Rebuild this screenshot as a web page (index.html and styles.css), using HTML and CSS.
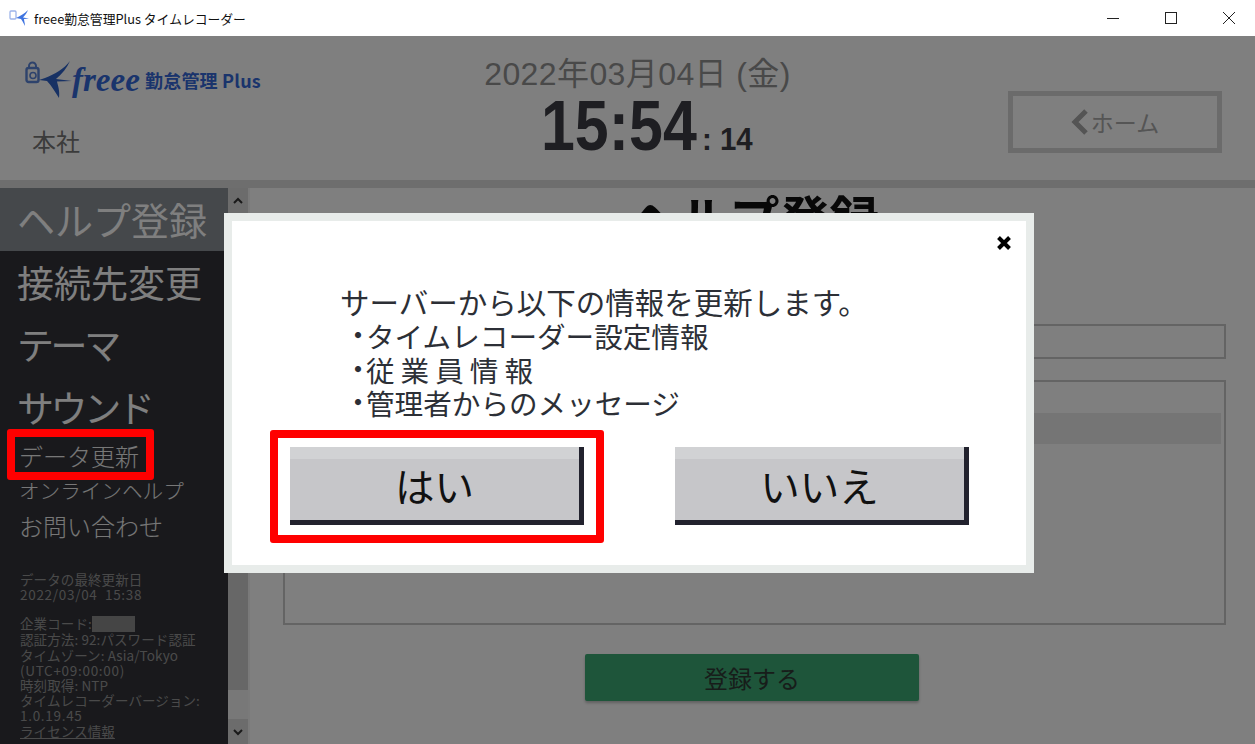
FILE: index.html
```html
<!DOCTYPE html>
<html lang="ja">
<head>
<meta charset="utf-8">
<title>freee勤怠管理Plus タイムレコーダー</title>
<link rel="stylesheet" href="styles.css">
</head>
<body>
<div class="window">
  <div class="titlebar">
    <svg class="title-icon" width="20" height="20" viewBox="0 0 20 20">
      <rect x="1" y="3" width="6" height="8" rx="1" fill="none" stroke="#9db4ea" stroke-width="1.300"/>
      <path d="M19 2 C15 6 11 8 7 10 L12 11 C14 14 15 16 16 18 C16 15 15 13 15 11 L20 10.500 L14 9.500 C16 7 18 5 19 2 Z" fill="#3f74e0"/>
    </svg>
    <span class="title-text">freee勤怠管理Plus タイムレコーダー</span>
    <div class="win-controls">
      <svg class="win-btn" width="14" height="14" viewBox="0 0 14 14"><path d="M1 7.500H13" stroke="#222" stroke-width="1"/></svg>
      <svg class="win-btn" width="14" height="14" viewBox="0 0 14 14"><rect x="1.500" y="1.500" width="11" height="11" fill="none" stroke="#222" stroke-width="1"/></svg>
      <svg class="win-btn" width="14" height="14" viewBox="0 0 14 14"><path d="M1 1L13 13M13 1L1 13" stroke="#222" stroke-width="1"/></svg>
    </div>
  </div>

  <div class="app">
    <header class="header">
      <div class="brand">
        <div class="logo">
          <svg class="logo-mark" width="48" height="40" viewBox="0 0 48 40">
            <rect x="1.500" y="8" width="12" height="14" rx="2" fill="none" stroke="#5d86d8" stroke-width="2.400"/>
            <path d="M4 8V6a3.500 3.500 0 0 1 7 0v2" fill="none" stroke="#5d86d8" stroke-width="2"/>
            <circle cx="8" cy="15.500" r="3" fill="none" stroke="#5d86d8" stroke-width="1.600"/>
            <path d="M45 1 C39 9 30 14 20 18 L14 20 L22 21 C27 26 30 32 34 38 C35 31 33 26 32 21.500 L47 21 L31 19 C37 14 42 8 45 1 Z" fill="#2f62c8"/>
          </svg>
          <span class="logo-freee">freee</span>
          <span class="logo-product">勤怠管理 Plus</span>
        </div>
        <div class="location">本社</div>
      </div>
      <div class="clock">
        <div class="date">2022年03月04日 (金)</div>
        <div class="time"><span class="time-main">15:54</span><span class="time-sec">: 14</span></div>
      </div>
      <button class="home">
        <svg width="18" height="28" viewBox="0 0 18 28"><path d="M15 3L4 14L15 25" fill="none" stroke="#a8a8a8" stroke-width="5"/></svg>
        <span>ホーム</span>
      </button>
    </header>
    <div class="strip"></div>

    <div class="main">
      <aside class="sidebar">
        <nav class="nav-main">
          <div class="nav-item active">ヘルプ登録</div>
          <div class="nav-item">接続先変更</div>
          <div class="nav-item kana">テーマ</div>
          <div class="nav-item kana">サウンド</div>
        </nav>
        <nav class="nav-sub">
          <div class="sub-item">データ更新</div>
          <div class="sub-item tight">オンラインヘルプ</div>
          <div class="sub-item">お問い合わせ</div>
        </nav>
        <div class="info">
          <div class="info-block">
            <div>データの最終更新日</div>
            <div class="spaced">2022/03/04&nbsp; 15:38</div>
          </div>
          <div class="info-block">
            <div>企業コード:<span class="masked"></span></div>
            <div>認証方法: 92:パスワード認証</div>
            <div>タイムゾーン: Asia/Tokyo</div>
            <div class="spaced">(UTC+09:00:00)</div>
            <div>時刻取得: NTP</div>
            <div>タイムレコーダーバージョン:</div>
            <div class="spaced">1.0.19.45</div>
            <div class="license">ライセンス情報</div>
          </div>
        </div>
      </aside>
      <div class="scrollbar">
        <div class="sb-arrow">
          <svg width="12" height="8" viewBox="0 0 12 8"><path d="M2 6L6 2L10 6" fill="none" stroke="#333" stroke-width="2"/></svg>
        </div>
        <div class="sb-thumb"></div>
        <div class="sb-rest"></div>
        <div class="sb-arrow">
          <svg width="12" height="8" viewBox="0 0 12 8"><path d="M2 2L6 6L10 2" fill="none" stroke="#333" stroke-width="2"/></svg>
        </div>
      </div>
      <main class="content">
        <h1 class="heading">ヘルプ登録</h1>
        <div class="field"></div>
        <div class="list">
          <div class="list-head"></div>
          <div class="list-row"></div>
        </div>
        <button class="submit">登録する</button>
      </main>
    </div>

    <div class="overlay"></div>

    <div class="annotation-side"></div>

    <section class="modal">
      <svg class="close" width="16" height="16" viewBox="0 0 16 16"><path d="M2.500 2.500L13.500 13.500M13.500 2.500L2.500 13.500" stroke="#000" stroke-width="4"/></svg>
      <div class="message">
        <p class="msg-line msg-lead">サーバーから以下の情報を更新します。</p>
        <p class="msg-line msg-item"><span class="dot">・</span>タイムレコーダー設定情報</p>
        <p class="msg-line msg-item wide"><span class="dot">・</span>従業員情報</p>
        <p class="msg-line msg-item"><span class="dot">・</span>管理者からのメッセージ</p>
      </div>
      <div class="actions">
        <div class="yes-frame"><button class="choice">はい</button></div>
        <button class="choice no">いいえ</button>
      </div>
    </section>
  </div>
</div>
</body>
</html>
```

FILE: styles.css
```css
*, *::before, *::after { box-sizing: border-box; }
html, body { margin: 0; padding: 0; }
body {
  width: 1255px;
  height: 744px;
  overflow: hidden;
  font-family: "Noto Sans CJK JP", "Liberation Sans", sans-serif;
  background: #fff;
}
p, h1 { margin: 0; }
button { font-family: inherit; padding: 0; cursor: pointer; }

.window { display: flex; flex-direction: column; height: 744px; }

/* title bar */
.titlebar {
  height: 36px;
  flex: none;
  display: flex;
  align-items: center;
  padding-left: 9px;
  background: #fff;
}
.title-icon { margin-right: 5px; }
.title-text { font-size: 12.800px; color: #111; white-space: nowrap; }
.win-controls { margin-left: auto; display: flex; gap: 44px; padding-right: 19px; }
.win-btn { display: block; }

/* app */
.app { position: relative; flex: 1; display: flex; flex-direction: column; min-height: 0; background: #fff; }

.header { height: 144px; flex: none; display: flex; position: relative; }
.brand { width: 485px; padding: 24px 0 0 25px; flex: none; }
.logo { display: flex; align-items: center; height: 40px; white-space: nowrap; }
.logo-mark { flex: none; }
.logo-freee {
  font-family: "Liberation Serif", serif;
  font-style: italic;
  font-weight: 700;
  font-size: 33px;
  line-height: 40px;
  color: #3568d8;
  margin-left: -1px;
  width: 73px;
}
.logo-product {
  font-weight: 700;
  font-size: 18px;
  line-height: 24px;
  letter-spacing: .2px;
  color: #3568d8;
}
.location { font-size: 24px; line-height: 34px; color: #777; margin: 24px 0 0 7px; }

.clock { width: 305px; flex: none; display: flex; flex-direction: column; align-items: center; padding-top: 19px; }
.date {
  font-family: "Liberation Sans", "Noto Sans CJK JP", sans-serif;
  font-size: 32px;
  line-height: 38px;
  letter-spacing: .4px;
  color: #939393;
  white-space: nowrap;
}
.time { display: flex; align-items: baseline; white-space: nowrap; color: #3d3d44; line-height: 60px; margin-top: 3px; padding-left: 19px; font-family: "Liberation Sans", sans-serif; font-weight: 700; }
.time-main { display: inline-block; width: 152px; font-size: 70px; transform: scaleX(.87); transform-origin: left center; }
.time-sec { display: inline-block; width: 51px; margin-left: 9px; font-size: 32px; transform: scaleX(.92); transform-origin: left center; }

.home {
  position: absolute;
  top: 55px;
  right: 33px;
  width: 214px;
  height: 62px;
  background: #fff;
  border: 5px solid #d6d6d6;
  display: flex;
  align-items: center;
  justify-content: center;
  gap: 2px;
  font-size: 23px;
  color: #aaa;
}

.strip { height: 8px; flex: none; background: #dcdcdc; }

.main { flex: 1; display: flex; min-height: 0; }

/* sidebar */
.sidebar { width: 228px; flex: none; background: #323339; overflow: hidden; }
.nav-item {
  height: 62.500px;
  padding-left: 17px;
  font-size: 37px;
  line-height: 62px;
  color: #fff;
  white-space: nowrap;
}
.nav-item.active { background: #8a9096; font-size: 38px; }
.nav-item.kana { letter-spacing: -3.400px; }
.sub-item {
  height: 35px;
  padding-left: 19px;
  font-size: 24px;
  line-height: 35px;
  font-weight: 300;
  color: #eee;
  white-space: nowrap;
}
.sub-item.tight { font-size: 20.600px; }
.info { padding: 29px 0 0 20px; font-size: 13.500px; line-height: 15.200px; color: #959595; white-space: nowrap; letter-spacing: .1px; }
.info .spaced { letter-spacing: .7px; }
.info-block { margin-bottom: 14px; }
.masked { display: inline-block; width: 43px; height: 16px; background: #8a8a8a; vertical-align: -3px; }
.license { text-decoration: underline; }

/* scrollbar */
.scrollbar { width: 22px; flex: none; display: flex; flex-direction: column; padding-right: 2px; background: #f4f4f4; }
.sb-arrow { height: 25px; flex: none; display: flex; align-items: center; justify-content: center; background: #d8d8d8; }
.sb-thumb { height: 477px; background: #cfcfcf; }
.sb-rest { flex: 1; background: #f0f0f0; }

/* content */
.content { flex: 1; min-width: 0; padding: 0 29px 0 33px; background: #fff; display: flex; flex-direction: column; }
.heading { height: 62px; font-size: 50px; line-height: 56px; font-weight: 700; color: #111; text-align: center; }
.field { height: 35px; margin-top: 74px; border: 2px solid #c8c8c8; }
.list { height: 245px; margin-top: 21px; border: 2px solid #c8c8c8; padding: 1px 3px 0 0; }
.list-head { height: 30px; }
.list-row { height: 31px; background: #ebebeb; }
.submit {
  align-self: center;
  width: 334px;
  height: 47px;
  margin: 29px 0 0 -5px;
  border: 0;
  border-radius: 2px;
  background: #3caa74;
  color: #2f3a34;
  font-size: 24px;
  box-shadow: 0 2px 3px rgba(0,0,0,.25);
}

.overlay { position: absolute; inset: 0; background: rgba(0,0,0,.5); }

.annotation-side {
  position: absolute;
  left: 7px;
  top: 393px;
  width: 147px;
  height: 51px;
  border: 8px solid #f00;
  border-radius: 3px;
}

/* modal */
.modal {
  position: absolute;
  left: 224px;
  top: 177px;
  width: 810px;
  height: 360px;
  background: #fff;
  border: 8px solid #e8ecea;
  padding: 64px 58px 0 38px;
}
.close { position: absolute; top: 14px; right: 14px; }
.message { padding-left: 70px; color: #2c2f36; white-space: nowrap; }
.msg-line { height: 33.300px; line-height: 33.300px; font-size: 28.600px; }
.msg-lead { font-size: 29.500px; margin-bottom: 1px; }
.msg-item { padding-left: 12px; }
.msg-item.wide { letter-spacing: 6px; }
.dot { display: inline-block; width: 15px; height: 33px; line-height: 30px; font-size: 24px; font-weight: 700; letter-spacing: 0; margin-left: -1px; text-indent: -5px; vertical-align: top; }
.actions { display: flex; justify-content: space-between; margin: 28px 0 0 20px; }
.choice {
  width: 294px;
  height: 78px;
  border: 0;
  border-right: 5px solid #22222e;
  border-bottom: 5px solid #22222e;
  background: linear-gradient(#d1d2d4 12px, #c6c6c9 12px);
  color: #111;
  font-size: 39.500px;
  font-weight: 400;
  line-height: 52px;
  padding-top: 2px;
}
.yes-frame { position: relative; }
.yes-frame::after {
  content: "";
  position: absolute;
  left: -20px;
  top: -17px;
  width: 334px;
  height: 113px;
  border: 8px solid #f00;
  border-radius: 3px;
}
.no { margin-right: -1px; }
```
